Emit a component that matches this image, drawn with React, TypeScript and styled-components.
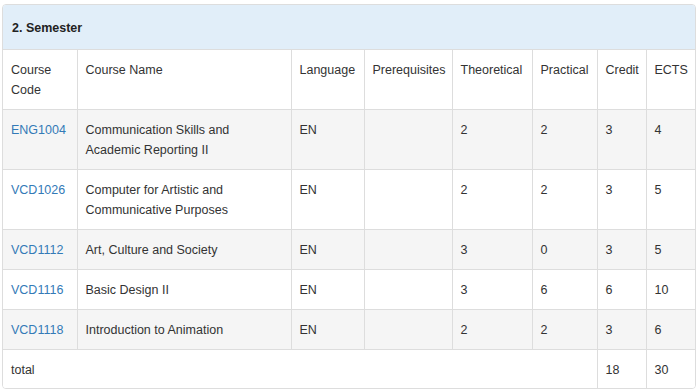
import React from "react";
import styled, { createGlobalStyle } from "styled-components";

const Global = createGlobalStyle`
  html, body { margin: 0; padding: 0; background: #fff; }
  body { font-family: "Liberation Sans", Arial, Helvetica, sans-serif; font-size: 12.5px; color: #333; }
`;

const Page = styled.div`
  padding: 4px 4px 3px 2px;
`;

const Panel = styled.div`
  border: 1px solid #ddd;
  border-radius: 4px;
  background: #fff;
  overflow: hidden;
`;

const Heading = styled.div`
  background: #e1eef9;
  border-bottom: 1px solid #ddd;
  padding: 13px 9px 11px;
  line-height: 20px;
  font-weight: bold;
  font-size: 12.5px;
  color: #222;
`;

const Table = styled.table`
  width: 100%;
  border-collapse: collapse;
  table-layout: fixed;
`;

const Row = styled.tr<{ $striped?: boolean; $compact?: boolean }>`
  background: ${(p) => (p.$striped ? "#f5f5f5" : "#fff")};
  &:last-child td { border-bottom: 0; }
`;

const Cell = styled.td`
  border: 1px solid #ddd;
  padding: 10px 8px 9px;
  line-height: 20px;
  vertical-align: top;
  text-align: left;
  font-weight: normal;
  font-size: 12.5px;
  color: #333;
  &:first-child { border-left: 0; }
  &:last-child { border-right: 0; }
`;

const TotalCell = styled(Cell)`
  padding-bottom: 8px;
`;

const HeadCell = styled(Cell).attrs({ as: "th" })`
  border-top: 0;
`;

const CodeLink = styled.a`
  color: #337ab7;
  text-decoration: none;
`;

const widths = [74, 214, 73, 88, 80, 65, 49, 49];

const courses = [
  { code: "ENG1004", name: "Communication Skills and Academic Reporting II", t: 2, p: 2, c: 3, e: 4 },
  { code: "VCD1026", name: "Computer for Artistic and Communicative Purposes", t: 2, p: 2, c: 3, e: 5 },
  { code: "VCD1112", name: "Art, Culture and Society", t: 3, p: 0, c: 3, e: 5 },
  { code: "VCD1116", name: "Basic Design II", t: 3, p: 6, c: 6, e: 10 },
  { code: "VCD1118", name: "Introduction to Animation", t: 2, p: 2, c: 3, e: 6 },
];

export default function App() {
  return (
    <>
      <Global />
      <Page>
        <Panel>
          <Heading>2. Semester</Heading>
          <Table>
            <colgroup>
              {widths.map((w, i) => (
                <col key={i} style={{ width: w }} />
              ))}
            </colgroup>
            <tbody>
              <Row>
                <HeadCell>Course Code</HeadCell>
                <HeadCell>Course Name</HeadCell>
                <HeadCell>Language</HeadCell>
                <HeadCell>Prerequisites</HeadCell>
                <HeadCell>Theoretical</HeadCell>
                <HeadCell>Practical</HeadCell>
                <HeadCell>Credit</HeadCell>
                <HeadCell>ECTS</HeadCell>
              </Row>
              {courses.map((c, i) => (
                <Row key={c.code} $striped={i % 2 === 0}>
                  <Cell>
                    <CodeLink href="#">{c.code}</CodeLink>
                  </Cell>
                  <Cell>{c.name}</Cell>
                  <Cell>EN</Cell>
                  <Cell></Cell>
                  <Cell>{c.t}</Cell>
                  <Cell>{c.p}</Cell>
                  <Cell>{c.c}</Cell>
                  <Cell>{c.e}</Cell>
                </Row>
              ))}
              <Row>
                <TotalCell colSpan={6}>total</TotalCell>
                <TotalCell>18</TotalCell>
                <TotalCell>30</TotalCell>
              </Row>
            </tbody>
          </Table>
        </Panel>
      </Page>
    </>
  );
}
